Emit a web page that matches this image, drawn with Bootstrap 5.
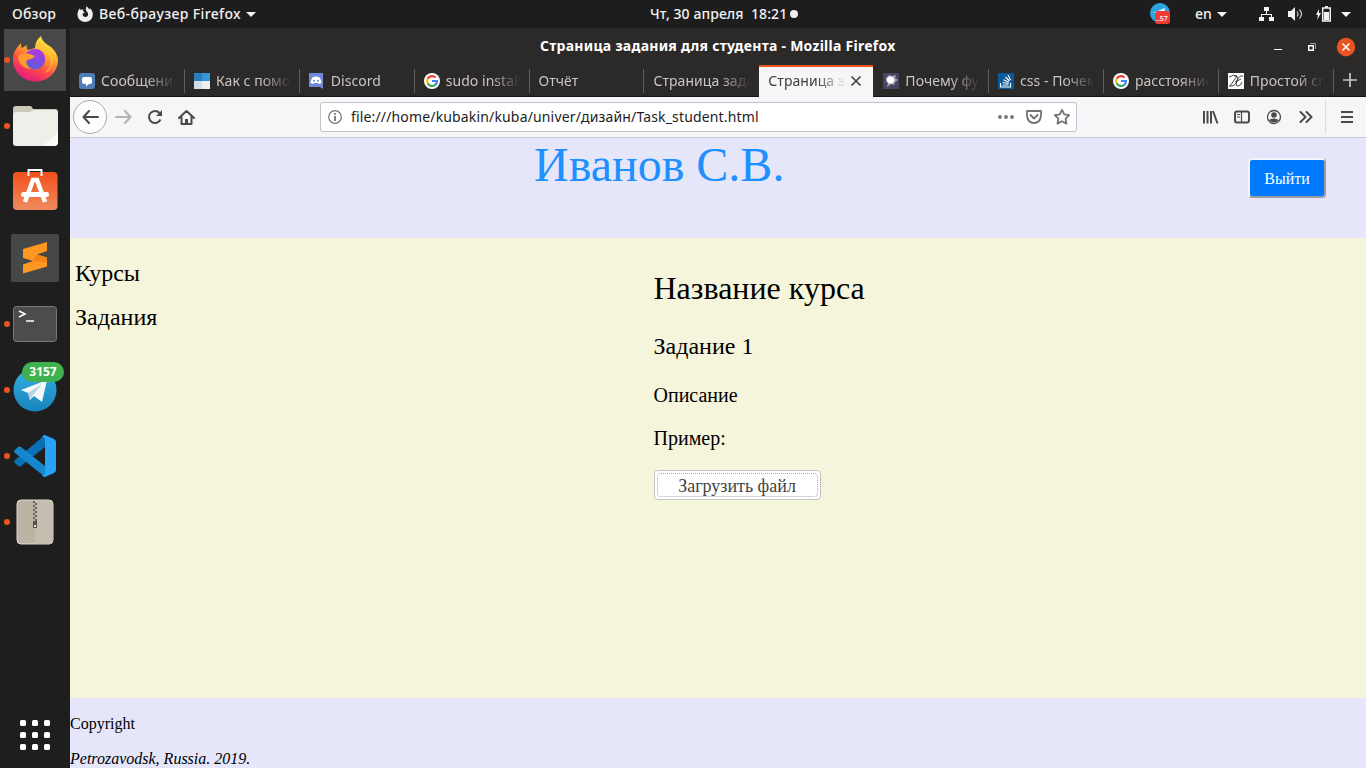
<!DOCTYPE html>
<html lang="ru">
<head>
<meta charset="utf-8">
<title>Страница задания для студента</title>
<link href="https://cdn.jsdelivr.net/npm/bootstrap@5.3.0/dist/css/bootstrap.min.css" rel="stylesheet">
<style>
body{width:1366px;height:768px;overflow:hidden;background:#1e1e1e;font:14px/20px "Noto Sans","Open Sans",sans-serif}
svg{display:block;flex:none}
.panel{height:28px;background:#1d1d1d;color:#f2f2f2;font-weight:500}
.caret{width:0;height:0;border:5px solid transparent;border-top-color:#f2f2f2;border-bottom:0}
.dock{width:70px;height:740px;background:#1e1e1e}
.slot{height:66px;width:70px}
.slot.on::before{content:"";position:absolute;left:4px;top:29px;width:6px;height:6px;border-radius:50%;background:#e95420}
.slot.focused{background:linear-gradient(#484848,#484848) 4px 1px/62px 62px no-repeat}
.win{width:1296px}
.titlebar{height:37px;background:#2c2929;color:#fff;font-weight:700}
.wtitle{margin-left:470px;width:732px;margin-top:-2px;letter-spacing:.26px}
.tabs{height:32px;background:#2c2929;border-bottom:1px solid #161415;color:#c8c6c4}
.tb{width:114.9px;height:31px;padding-left:9px}
.tb::after{content:"";position:absolute;right:0;top:4px;width:1px;height:24px;background:#5e5c5c}
.tb.nosep::after{display:none}
.tb svg{margin-right:6px}
.tt{overflow:hidden;white-space:nowrap;flex:none;height:20px;letter-spacing:.05px;-webkit-mask-image:linear-gradient(90deg,#000 calc(100% - 30px),transparent)}
.tb.cur{background:#f5f6f8;color:#3c3c3d;border-top:2px solid #e95420;height:32px;margin-bottom:-1px;padding-bottom:3px;width:114px}
.bar{height:41px;background:#f5f6f8;border-bottom:1px solid #c8c8d6}
.url{width:757px;height:30px;background:#fff;border:1px solid #c0c1c8;border-radius:3px;color:#1c1c1e}
.addr{margin-left:9px;width:646px;letter-spacing:.155px}
.backc{width:34px;height:34px;border:1px solid #a9aaac;border-radius:50%;background:#fdfdfd}
.page{font-family:"Liberation Serif",serif;color:#000}
.hd{height:100px;background:#e6e6fa}
.hd h1{font-size:48px;line-height:53px;color:#1e90ff;padding-left:464px}
.mid{height:460px;background:#f5f5dc}
.side{width:583.5px;padding:22px 0 0 5px;font-size:24px;line-height:27px}
.exit{width:78px;height:40px;margin:20px 40px 0 0;background:#007bff;color:#fff;border:2px solid;border-color:#f4f4fa #9c9ca6 #9c9ca6 #f4f4fa;border-radius:4px;font-size:16px;line-height:18px;padding:2px 0 0}
.load{width:167px;height:30px;background:#fff;border:1px solid #c1c3c9;border-radius:4px;padding:2px}
.load span{border:1px dotted #aaa;border-radius:4px;height:24px;font-size:18px;line-height:24px;color:#444}
.ft{height:70px;background:#e6e6fa;font-size:16px;line-height:18px;padding-top:17px}
.cnt{left:22px;top:4px;width:42px;height:20px;border-radius:10px;background:#3fb24f;color:#fff;font-weight:700;font-size:12px;line-height:20px}
</style>
</head>
<body class="d-flex flex-column">
<svg width="0" height="0" class="position-absolute"><defs>
<symbol id="g" viewBox="0 0 16 16"><circle cx="8" cy="8" r="8" fill="#fff"/><g fill="none" stroke-width="2.2"><path d="M11.6 4.6A5 5 0 0 0 3.6 5.8" stroke="#ea4335"/><path d="M3.6 5.7a5 5 0 0 0 0 4.6" stroke="#fbbc05"/><path d="M3.6 10.2a5 5 0 0 0 7.8 1.5" stroke="#34a853"/><path d="M8 8h5a5 5 0 0 1-1.7 3.8" stroke="#4285f4"/></g></symbol>
</defs></svg>
<header class="panel d-flex align-items-center">
 <div class="d-flex align-items-center" style="width:650px">
  <span style="margin-left:12px;width:65px;letter-spacing:.2px">Обзор</span>
  <svg width="16" height="17" viewBox="0 0 16 17"><path d="M.5 9C.3 6.500 1.300 4 3 2.300L3.500 4 6.500 3.200 5.800 5.300 8 6 5.500 8C5.500 10 7 11 8.400 11c2 0 3-1.700 2.600-3.500C10.500 6 9.500 5.500 9 4.200 8.600 2.800 9 1.200 10 0c.3 1.500 1.300 2 2.500 3.200l.5-1C15 4 16 6.300 15.800 9 15.500 13 12.300 16 8.300 16S.7 13 .5 9z" fill="#eee"/></svg>
  <span class="text-nowrap" style="margin-left:6px;width:147px;letter-spacing:.37px">Веб-браузер Firefox</span>
  <i class="caret"></i>
 </div>
 <div class="d-flex align-items-center" style="width:500px"><span style="width:140px;white-space:pre;letter-spacing:.08px">Чт, 30 апреля  18:21</span><svg width="8" height="8"><circle cx="4" cy="4" r="4" fill="#eee"/></svg></div>
 <div class="d-flex align-items-center">
  <svg width="21" height="22" viewBox="0 0 21 22"><circle cx="10" cy="10" r="10" fill="#2ca5e0"/><path d="M3 10l12-5-1 5H6z" fill="#fff"/><rect x="5" y="8" width="15" height="13" rx="3" fill="#f23c34"/><text x="6" y="17.500" font-size="7" fill="#fff" font-family="Noto Sans">..57</text></svg>
  <span style="margin-left:24px;width:22px">en</span><i class="caret"></i>
  <svg style="margin-left:32px" width="15" height="15" viewBox="0 0 15 15" fill="#f2f2f2"><path d="M5 0h5v4H8v3h5v3h2v4h-5v-4h2V8H3v2h2v4H0v-4h2V7h5V4H5z"/></svg>
  <svg style="margin-left:14px" width="16" height="14" viewBox="0 0 16 14"><path d="M0 4h3l4-4v14l-4-4H0z" fill="#f2f2f2"/><path d="M9 4.500q2 2.500 0 5M11.500 2.500q4 4.500 0 9" fill="none" stroke="#ccc" stroke-width="1.200"/></svg>
  <svg style="margin-left:12px" width="15" height="16" viewBox="0 0 15 16"><path d="M3 3L0 9h2l-1 5 4-7H3zM8 1h4V0h-3v1z" fill="#f2f2f2"/><path d="M6.700 2h7.600v13H6.700zM9 1h3" fill="none" stroke="#f2f2f2" stroke-width="1.500"/><path d="M8 6h5v8H8z" fill="#f2f2f2"/></svg>
  <i class="caret" style="margin-left:10px"></i>
 </div>
</header>
<div class="d-flex">
<nav class="dock d-flex flex-column position-relative">
 <div class="slot on focused position-relative"><svg width="70" height="66" viewBox="0 0 70 66"><defs><linearGradient id="ff" x1=".8" y1="0" x2=".3" y2="1"><stop stop-color="#fff44f"/><stop offset=".35" stop-color="#ffb42c"/><stop offset=".65" stop-color="#ff5140"/><stop offset="1" stop-color="#e31587"/></linearGradient><linearGradient id="fp" x1=".7" y1="0" x2=".3" y2="1"><stop stop-color="#b833e1"/><stop offset="1" stop-color="#5561dd"/></linearGradient></defs><path d="M13 31c0-6 3-11 8-16 0 2 0 4 1 5l5-3c-1 2 0 4 1 5l7-2c0-5 2-9 6-12 1 5 5 8 10 11 4 4 7 8 7 14a22.500 21.500 0 0 1-45-2z" fill="url(#ff)"/><circle cx="35" cy="31" r="10.300" fill="url(#fp)"/><path d="M18 28c4-3 8-3 12-2 2 1 3 1 5 2-2 3-5 3-8 4-2 3 1 7 5 9-9 0-14-6-14-13z" fill="#ff9a2c"/><path d="M36 20c7-1 11 2 14 8 0-2-1-4-2-5 6 8 5 16-2 21" fill="none" stroke="#ffc53d" stroke-width="2" opacity=".5"/></svg></div>
 <div class="slot on position-relative"><svg width="70" height="66"><path d="M13 15q0-3 3-3h14q2 0 3 3h22q3 0 3 3v24H13z" fill="#cdc9b9"/><path d="M13 21q0-3 3-3h14l3-2h22q3 0 3 3v29q0 4-4 4H16q-3 0-3-3z" fill="#efeee9"/><path d="M58 38v10q0 4-4 4H43z" fill="#fbfaf7"/></svg></div>
 <div class="slot"><svg width="70" height="66"><defs><linearGradient id="sh" x1="0" y1="0" x2="0" y2="1"><stop stop-color="#f0501b"/><stop offset="1" stop-color="#f08b5d"/></linearGradient></defs><rect x="13" y="12" width="44.500" height="38" rx="4" fill="url(#sh)"/><path d="M28.500 16V10h13v6" fill="none" stroke="#fff" stroke-width="2"/><path d="M25 42l8-22h4l8 22" fill="none" stroke="#fff" stroke-width="4.500"/><rect x="21" y="32" width="28" height="5" rx="2.500" fill="#fff"/></svg></div>
 <div class="slot"><svg width="70" height="66"><rect x="11" y="8" width="48" height="48" rx="2" fill="#464747"/><path d="M23 23l24-7v9l-10 3.500 10 3v9l-24 7v-9l10-3.500-10-3z" fill="#ff9821"/><path d="M33 35l4-6.500 10 3v5z" fill="#ef8517"/></svg></div>
 <div class="slot on position-relative"><svg width="70" height="66"><rect x="13.500" y="14.500" width="43" height="35" rx="3" fill="#4c4c4c" stroke="#777"/><path d="M19 19l6 3-6 3M26 29h8" fill="none" stroke="#fff" stroke-width="1.600"/></svg></div>
 <div class="slot on position-relative"><svg width="70" height="66"><defs><linearGradient id="tg" x1="0" y1="0" x2="0" y2="1"><stop stop-color="#37aee2"/><stop offset="1" stop-color="#1684bd"/></linearGradient></defs><circle cx="35" cy="32" r="21.500" fill="url(#tg)"/><path d="M21 32l26-10-5 22-8-6-4 4-2-7z" fill="#f4f8fb"/><path d="M28 35l14-9-9 11-3 5z" fill="#b7d2e5"/></svg><span class="cnt position-absolute text-center">3157</span></div>
 <div class="slot on position-relative"><svg width="70" height="66"><path d="M14 38l4 4q2 1 3 0l24-19V11L15 36q-1 1-1 2z" fill="#0870b5"/><path d="M14 27l4-4q2-1 3 0l24 19v11L15 29q-1-1-1-2z" fill="#1587ce"/><path d="M45 11l9 4q2 1 2 3v28q0 2-2 3l-9 4q-2 0-3-2 3 0 3-3V16q0-3-3-3 1-2 3-2z" fill="#28a3f3"/></svg></div>
 <div class="slot on position-relative"><svg width="70" height="66"><rect x="17" y="10" width="36" height="44" rx="4" fill="#bab4a4" stroke="#dedbd2"/><path d="M35 11h14q4 0 4 4v35q0 4-4 4H35z" fill="#c3beaf"/><path d="M34 11v22M36 13v20" stroke="#66635b" stroke-width="2" stroke-dasharray="2 2"/><path d="M33 31h4v7h-4z" fill="#55524b"/><path d="M34 35h2v2h-2z" fill="#ddd"/></svg></div>
 <svg class="mt-auto" width="70" height="52" style="margin-bottom:14px" viewBox="0 702 70 52" fill="#fff"><g id="row3"><rect x="20" y="720" width="6" height="6" rx="1.500"/><rect x="32" y="720" width="6" height="6" rx="1.500"/><rect x="44" y="720" width="6" height="6" rx="1.500"/></g><use href="#row3" y="12"/><use href="#row3" y="24"/></svg>
</nav>
<main class="win">
 <div class="titlebar d-flex align-items-center">
  <span class="wtitle text-nowrap">Страница задания для студента - Mozilla Firefox</span>
  <svg width="88" height="20" viewBox="1272 36 88 20"><path d="M1274 48.500h8" stroke="#fff"/><path d="M1310 42.500h5.500v5.500" fill="none" stroke="#999"/><path d="M1308.700 44.700h4.600v4.600h-4.600z" fill="none" stroke="#fff" stroke-width="1.400"/><circle cx="1346" cy="46" r="9.200" fill="#e95420"/><path d="M1342.500 42.500l7 7m0-7l-7 7" stroke="#fff" stroke-width="1.500"/></svg>
 </div>
 <div class="tabs d-flex">
  <div class="tb d-flex align-items-center position-relative"><svg width="16" height="16"><rect width="16" height="16" rx="3" fill="#4d7eb8"/><path d="M5 4h6q2 0 2 2v3q0 2-2 2h-1l-3 2.500V11H5q-2 0-2-2V6q0-2 2-2z" fill="#fff"/></svg><span class="tt" style="width:75px">Сообщения</span></div>
  <div class="tb d-flex align-items-center position-relative"><svg width="16" height="16"><path d="M0 0h8v8H0z" fill="#2980b9"/><path d="M8 0h8v8H8z" fill="#3498db"/><path d="M0 8h8v8H0z" fill="#d0dfe6"/><path d="M8 8h8v8H8z" fill="#ecf0f1"/></svg><span class="tt" style="width:75px">Как с помощью</span></div>
  <div class="tb d-flex align-items-center position-relative"><svg width="16" height="16"><path d="M0 0h14v16l-3-2H0z" fill="#7289da"/><path d="M3.500 4.500q4-2 7 0 2 2.500 2 5.500l-2.500 1-1-1H5l-1 1-2.500-1q0-3 2-5.500z" fill="#fff"/><circle cx="5" cy="7.700" r="1" fill="#7289da"/><circle cx="9" cy="7.700" r="1" fill="#7289da"/></svg><span class="tt" style="width:82px">Discord</span></div>
  <div class="tb d-flex align-items-center position-relative"><svg width="16" height="16"><use href="#g"/></svg><span class="tt" style="width:75px">sudo install</span></div>
  <div class="tb d-flex align-items-center position-relative"><span class="tt" style="width:95px">Отчёт</span></div>
  <div class="tb d-flex align-items-center position-relative nosep"><span class="tt" style="width:97px">Страница задания</span></div>
  <div class="tb cur d-flex align-items-center position-relative nosep"><span class="tt" style="width:78px">Страница задания</span><svg class="m-0" style="margin-left:4px!important" width="12" height="12"><path d="M1.500 1.500l9 9m0-9l-9 9" stroke="#444" stroke-width="1.700"/></svg></div>
  <div class="tb d-flex align-items-center position-relative" style="width:115.700px;padding-left:10px"><svg width="16" height="16"><path d="M0 0h16v16H0z" fill="#474562"/><path d="M3 5l3-3 3 1 4-1-1 3 3 2-3 2-1 3-3-1-4 3 1-4-2-2z" fill="#aaa9bc"/><circle cx="7.500" cy="7" r="3.500" fill="#fff"/></svg><span class="tt" style="width:75px">Почему функция</span></div>
  <div class="tb d-flex align-items-center position-relative"><svg width="16" height="16"><path d="M0 0h16v16H0z" fill="#0a5a9c"/><path d="M2.500 10v4h10v-4M4.500 12h6M4.700 9.500l5.800 1M5.500 6.700l5.300 2.600M7.500 4l4 4M10 2l2.500 5" fill="none" stroke="#fff" stroke-width="1.100"/></svg><span class="tt" style="width:75px">css - Почему</span></div>
  <div class="tb d-flex align-items-center position-relative"><svg width="16" height="16"><use href="#g"/></svg><span class="tt" style="width:75px">расстояние</span></div>
  <div class="tb d-flex align-items-center position-relative"><svg width="16" height="16"><path d="M0 0h16v16H0z" fill="#fff"/><path d="M1 4q5-3 8-1L2 13M1 13q6 1 8-5t-3-5M15 3q-4-1-6 5t1 5q3 0 4-4M7 9l6-3" fill="none" stroke="#333" stroke-width=".9"/></svg><span class="tt" style="width:75px">Простой способ</span></div>
  <svg style="margin:7px 0 0 8px" width="16" height="16"><path d="M8 1v14M1 8h14" stroke="#c9c7c5" stroke-width="1.700"/></svg>
 </div>
 <div class="bar d-flex align-items-center">
  <div class="backc d-flex align-items-center justify-content-center" style="margin-left:3px"><svg width="17" height="14" fill="none" stroke="#4a4a4c" stroke-width="2" stroke-linecap="round" stroke-linejoin="round"><path d="M16 7H1.500M7 1L1.500 7 7 13"/></svg></div>
  <svg style="margin-left:8px" width="17" height="14" fill="none" stroke="#b3b4b6" stroke-width="2" stroke-linecap="round" stroke-linejoin="round"><path d="M1 7h14.500M10 1l5.500 6-5.500 6"/></svg>
  <svg style="margin-left:15px" width="16" height="16"><path d="M13.500 10.500A6 6 0 1 1 12.500 4" fill="none" stroke="#4a4a4c" stroke-width="2"/><path d="M15 1v6H9z" fill="#4a4a4c"/></svg>
  <svg style="margin-left:15px" width="17" height="17"><path d="M1 9l7.500-7L16 9M3.500 7.500V15h10V7.500" fill="none" stroke="#4a4a4c" stroke-width="2" stroke-linecap="round" stroke-linejoin="round"/><path d="M7 10h3v5H7z" fill="#4a4a4c"/></svg>
  <div class="url d-flex align-items-center" style="margin-left:125px">
   <svg style="margin-left:7px" width="14" height="14"><circle cx="7" cy="7" r="6.300" fill="none" stroke="#737375" stroke-width="1.200"/><path d="M7 6v5M7 3v1.800" stroke="#737375" stroke-width="1.800"/></svg>
   <span class="addr text-nowrap">file:///home/kubakin/kuba/univer/дизайн/Task_student.html</span>
   <svg width="74" height="18" viewBox="997 108 74 18" fill="none" stroke="#737375" stroke-width="1.800" stroke-linejoin="round" stroke-linecap="round"><g fill="#737375" stroke="none"><circle cx="1000" cy="117" r="1.900"/><circle cx="1006" cy="117" r="1.900"/><circle cx="1012" cy="117" r="1.900"/></g><path d="M1027 111h14v5q-1 7-7 7t-7-7zM1030.500 115l3.500 3.500 3.500-3.500M1062 109.800l2.200 4.600 5 .7-3.600 3.500.9 5-4.500-2.400-4.500 2.400.9-5-3.600-3.500 5-.7z"/></svg>
  </div>
  <svg width="289" height="40" viewBox="1077 97 289 40" fill="none" stroke="#4a4a4c" stroke-width="2"><path d="M1204 111v12.500M1207.500 111v12.500M1211 111v12.500M1213 111l4.500 12.500"/><rect x="1235" y="111.500" width="14" height="11" rx="2"/><path d="M1241.500 111v12M1237 114.500h3M1237 117h3" stroke-width="1.200"/><circle cx="1274" cy="117" r="6.500" stroke-width="1.300"/><circle cx="1274" cy="115" r="2.800" fill="#4a4a4c" stroke="none"/><path d="M1269 120q5-3 10 0-5 5-10 0z" fill="#4a4a4c" stroke="none"/><path d="M1300.500 112l5 5-5 5M1306.500 112l5 5-5 5" stroke-linecap="round" stroke-linejoin="round"/><path d="M1325.500 100v34" stroke="#dcdcdf" stroke-width="1"/><path d="M1341 112h12M1341 117h12M1341 122h12"/></svg>
 </div>
 <div class="page">
  <header class="hd d-flex justify-content-between align-items-start"><h1 class="fw-normal m-0">Иванов С.В.</h1><button class="exit">Выйти</button></header>
  <section class="mid d-flex">
   <div class="side"><p style="margin-bottom:17px">Курсы</p><p class="m-0">Задания</p></div>
   <div style="padding-top:32px">
    <p style="font-size:32px;line-height:37px;margin-bottom:26px">Название курса</p>
    <p style="font-size:24px;line-height:27px;margin-bottom:24px">Задание 1</p>
    <p style="font-size:20px;line-height:23px;margin-bottom:20px">Описание</p>
    <p style="font-size:20px;line-height:23px;margin-bottom:20px">Пример:</p>
    <div class="load"><span class="d-block text-center">Загрузить файл</span></div>
   </div>
  </section>
  <footer class="ft"><p style="margin-bottom:17px">Copyright</p><p class="fst-italic m-0">Petrozavodsk, Russia. 2019.</p></footer>
 </div>
</main>
</div>
<script src="https://cdn.jsdelivr.net/npm/bootstrap@5.3.0/dist/js/bootstrap.bundle.min.js"></script>
</body>
</html>
